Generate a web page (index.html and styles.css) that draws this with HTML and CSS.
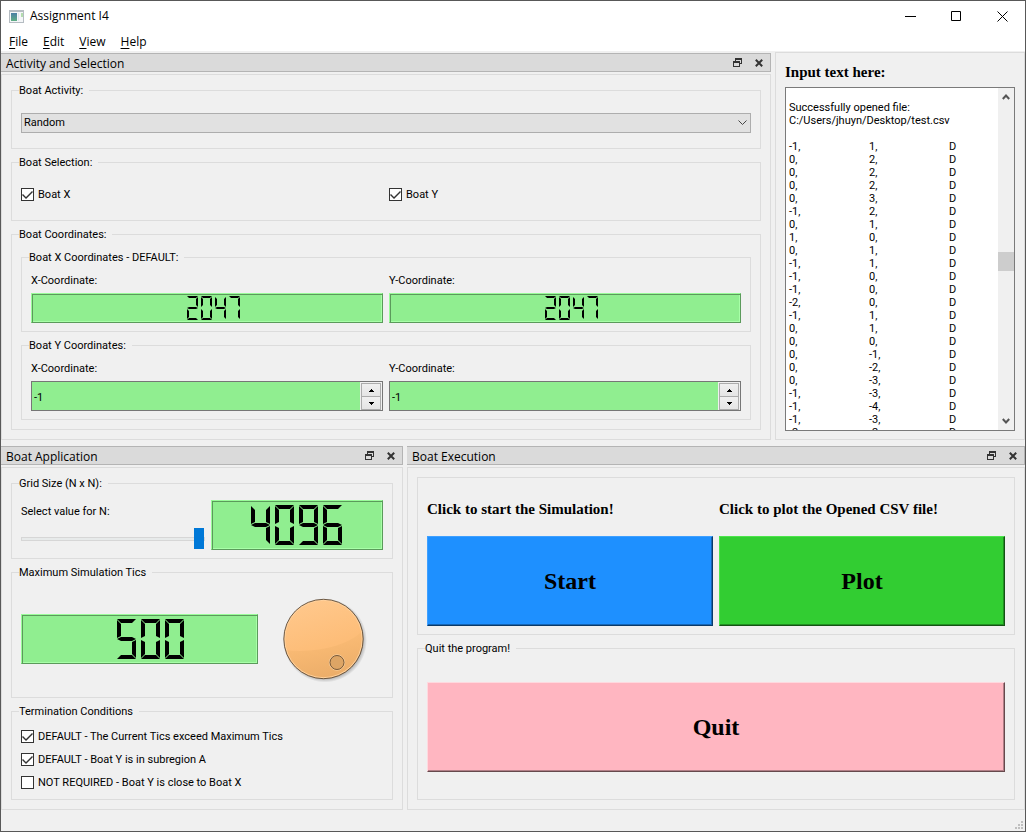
FILE: index.html
```html
<!DOCTYPE html>
<html lang="en">
<head>
<meta charset="utf-8">
<title>Assignment I4</title>
<link rel="stylesheet" href="styles.css">
</head>
<body>
<svg class="defs" aria-hidden="true">
  <symbol id="float" viewBox="0 0 9 9"><path d="M2 0h7v6H7V5h1V2H3v1H2zM0 3h7v6H0zM1 5v3h5V5z" fill="#333" fill-rule="evenodd"/></symbol>
  <symbol id="close" viewBox="0 0 8 8"><path d="M0.8 0.8l6.4 6.4M7.2 0.8L0.8 7.2" stroke="#333" stroke-width="2" fill="none"/></symbol>
</svg>
<div class="window">
  <header class="titlebar">
    <svg class="app-icon" viewBox="0 0 15 13"><defs><linearGradient id="ic" x1="0" y1="0" x2="0" y2="1"><stop offset="0" stop-color="#4a7fa5"/><stop offset="1" stop-color="#5fae84"/></linearGradient></defs><path d="M0 0h15v13H0z" fill="#b5bcc2"/><path d="M1 2h13v10H1z" fill="#f4f6f8"/><path d="M2 3h6v8H2z" fill="url(#ic)"/><path d="M12 3h2v4h-2z" fill="#b3dcae"/><path d="M9 3h1v8H9z" fill="#dfe5ee"/></svg>
    <h1 class="caption">Assignment I4</h1>
    <button class="win-btn" aria-label="Minimize"><svg viewBox="0 0 11 11"><path d="M0 5.5h11" stroke="#000"/></svg></button>
    <button class="win-btn" aria-label="Maximize"><svg viewBox="0 0 11 11"><path d="M.5.5h9v9h-9z" stroke="#000" fill="none"/></svg></button>
    <button class="win-btn" aria-label="Close"><svg viewBox="0 0 11 11"><path d="M.5.5l10 10M10.5.5l-10 10" stroke="#000"/></svg></button>
  </header>
  <nav class="menubar">
    <button class="menu"><u>F</u>ile</button>
    <button class="menu"><u>E</u>dit</button>
    <button class="menu"><u>V</u>iew</button>
    <button class="menu"><u>H</u>elp</button>
  </nav>
  <main class="workspace">
    <div class="row row-top">
      <section class="dock">
        <header class="dock-title"><h2>Activity and Selection</h2>
          <button aria-label="Float"><svg class="ico-float"><use href="#float"/></svg></button>
          <button aria-label="Close panel"><svg class="ico-close"><use href="#close"/></svg></button>
        </header>
        <div class="dock-body">
          <fieldset class="group grow">
            <legend><label for="activity">Boat Activity:</label></legend>
            <div class="combo">
              <select id="activity"><option>Random</option></select>
              <svg class="combo-arrow" viewBox="0 0 9 5"><path d="M.5.5l4 4 4-4" fill="none" stroke="#444"/></svg>
            </div>
          </fieldset>
          <fieldset class="group grow">
            <legend>Boat Selection:</legend>
            <div class="cols">
              <label class="check"><input type="checkbox" checked>Boat X</label>
              <label class="check"><input type="checkbox" checked>Boat Y</label>
            </div>
          </fieldset>
          <fieldset class="group">
            <legend>Boat Coordinates:</legend>
            <div class="stack">
              <fieldset class="group">
                <legend>Boat X Coordinates - DEFAULT:</legend>
                <div class="cols">
                  <div class="field"><span>X-Coordinate:</span>
                    <div class="lcd lcd-small" role="img" aria-label="2047"><i class="digit"></i><i class="digit"><b class="a"></b><b class="b"></b><b class="g"></b><b class="e"></b><b class="d"></b></i><i class="digit"><b class="a"></b><b class="b"></b><b class="c"></b><b class="d"></b><b class="e"></b><b class="f"></b></i><i class="digit"><b class="f"></b><b class="g"></b><b class="b"></b><b class="c"></b></i><i class="digit"><b class="a"></b><b class="b"></b><b class="c"></b></i></div>
                  </div>
                  <div class="field"><span>Y-Coordinate:</span>
                    <div class="lcd lcd-small" role="img" aria-label="2047"><i class="digit"></i><i class="digit"><b class="a"></b><b class="b"></b><b class="g"></b><b class="e"></b><b class="d"></b></i><i class="digit"><b class="a"></b><b class="b"></b><b class="c"></b><b class="d"></b><b class="e"></b><b class="f"></b></i><i class="digit"><b class="f"></b><b class="g"></b><b class="b"></b><b class="c"></b></i><i class="digit"><b class="a"></b><b class="b"></b><b class="c"></b></i></div>
                  </div>
                </div>
              </fieldset>
              <fieldset class="group">
                <legend>Boat Y Coordinates:</legend>
                <div class="cols">
                  <div class="field"><label for="yx">X-Coordinate:</label>
                    <div class="spin"><input id="yx" type="number" value="-1"><div class="steps"><button aria-label="Increase X"><svg viewBox="0 0 5 3"><path d="M2 0h1v1h1v1h1v1H0V2h1V1h1z"/></svg></button><button aria-label="Decrease X"><svg viewBox="0 0 5 3"><path d="M0 0h5v1H4v1H3v1H2V2H1V1H0z"/></svg></button></div></div>
                  </div>
                  <div class="field"><label for="yy">Y-Coordinate:</label>
                    <div class="spin"><input id="yy" type="number" value="-1"><div class="steps"><button aria-label="Increase Y"><svg viewBox="0 0 5 3"><path d="M2 0h1v1h1v1h1v1H0V2h1V1h1z"/></svg></button><button aria-label="Decrease Y"><svg viewBox="0 0 5 3"><path d="M0 0h5v1H4v1H3v1H2V2H1V1H0z"/></svg></button></div></div>
                  </div>
                </div>
              </fieldset>
            </div>
          </fieldset>
        </div>
      </section>
      <section class="side">
        <label class="heading" for="log">Input text here:</label>
        <div class="log">
<textarea id="log" spellcheck="false">

Successfully opened file:
C:/Users/jhuyn/Desktop/test.csv

-1,	1,	D
0,	2,	D
0,	2,	D
0,	2,	D
0,	3,	D
-1,	2,	D
0,	1,	D
1,	0,	D
0,	1,	D
-1,	1,	D
-1,	0,	D
-1,	0,	D
-2,	0,	D
-1,	1,	D
0,	1,	D
0,	0,	D
0,	-1,	D
0,	-2,	D
0,	-3,	D
-1,	-3,	D
-1,	-4,	D
-1,	-3,	D
-2,	-2,	D</textarea>
          <div class="scroll">
            <button aria-label="Scroll up"><svg viewBox="0 0 8 6"><path d="M.8 5L4 1.5 7.200 5" fill="none" stroke="#555" stroke-width="2"/></svg></button>
            <div class="track"><div class="thumb"></div></div>
            <button aria-label="Scroll down"><svg viewBox="0 0 8 6"><path d="M.8 1L4 4.500 7.200 1" fill="none" stroke="#555" stroke-width="2"/></svg></button>
          </div>
        </div>
      </section>
    </div>
    <div class="row row-bottom">
      <section class="dock">
        <header class="dock-title"><h2>Boat Application</h2>
          <button aria-label="Float"><svg class="ico-float"><use href="#float"/></svg></button>
          <button aria-label="Close panel"><svg class="ico-close"><use href="#close"/></svg></button>
        </header>
        <div class="dock-body">
          <fieldset class="group">
            <legend>Grid Size (N x N):</legend>
            <div class="size">
              <div class="slide"><label for="n">Select value for N:</label><input id="n" type="range" min="0" max="4096" value="4096"></div>
              <div class="lcd" role="img" aria-label="4096"><i class="digit"><b class="f"></b><b class="g"></b><b class="b"></b><b class="c"></b></i><i class="digit"><b class="a"></b><b class="b"></b><b class="c"></b><b class="d"></b><b class="e"></b><b class="f"></b></i><i class="digit"><b class="a"></b><b class="b"></b><b class="c"></b><b class="d"></b><b class="f"></b><b class="g"></b></i><i class="digit"><b class="a"></b><b class="c"></b><b class="d"></b><b class="e"></b><b class="f"></b><b class="g"></b></i></div>
            </div>
          </fieldset>
          <fieldset class="group grow">
            <legend>Maximum Simulation Tics</legend>
            <div class="tics">
              <div class="lcd" role="img" aria-label="500"><i class="digit"></i><i class="digit"><b class="a"></b><b class="f"></b><b class="g"></b><b class="c"></b><b class="d"></b></i><i class="digit"><b class="a"></b><b class="b"></b><b class="c"></b><b class="d"></b><b class="e"></b><b class="f"></b></i><i class="digit"><b class="a"></b><b class="b"></b><b class="c"></b><b class="d"></b><b class="e"></b><b class="f"></b></i></div>
              <svg class="dial" viewBox="0 0 88 88" role="img" aria-label="Maximum tics dial">
                <defs>
                  <linearGradient id="face" x1=".3" y1="0" x2=".6" y2="1"><stop offset="0" stop-color="#ffc88c"/><stop offset=".6" stop-color="#fdbd78"/><stop offset="1" stop-color="#fbbb75"/></linearGradient>
                  <linearGradient id="shade" x1=".3" y1=".1" x2=".6" y2="1"><stop offset="0" stop-color="#fcbd78"/><stop offset=".4" stop-color="#f6b771"/><stop offset="1" stop-color="#ebad69"/></linearGradient>
                  <radialGradient id="drop"><stop offset=".88" stop-color="#000" stop-opacity=".3"/><stop offset="1" stop-color="#000" stop-opacity="0"/></radialGradient>
                </defs>
                <circle cx="45" cy="45.500" r="42" fill="url(#drop)"/>
                <circle cx="43.500" cy="44" r="39.500" fill="url(#face)"/>
                <path d="M5.500 55C34 59 70 50 82 36A39.500 39.500 0 0 1 5.500 55z" fill="url(#shade)"/>
                <circle cx="43.500" cy="44" r="38.700" fill="none" stroke="#ffd29e"/>
                <circle cx="43.500" cy="44" r="39.700" fill="none" stroke="#5d4a34" stroke-width=".9"/>
                <circle cx="57" cy="67.500" r="7.700" fill="none" stroke="#f8cf9d"/>
                <circle cx="57" cy="67.500" r="7" fill="#dda565" stroke="#77593a"/>
              </svg>
            </div>
          </fieldset>
          <fieldset class="group">
            <legend>Termination Conditions</legend>
            <div class="checks">
              <label class="check"><input type="checkbox" checked>DEFAULT - The Current Tics exceed Maximum Tics</label>
              <label class="check"><input type="checkbox" checked>DEFAULT - Boat Y is in subregion A</label>
              <label class="check"><input type="checkbox">NOT REQUIRED - Boat Y is close to Boat X</label>
            </div>
          </fieldset>
        </div>
      </section>
      <section class="dock">
        <header class="dock-title"><h2>Boat Execution</h2>
          <button aria-label="Float"><svg class="ico-float"><use href="#float"/></svg></button>
          <button aria-label="Close panel"><svg class="ico-close"><use href="#close"/></svg></button>
        </header>
        <div class="dock-body halves">
          <div class="group actions">
            <div class="action"><p class="heading">Click to start the Simulation!</p><button class="big start">Start</button></div>
            <div class="action"><p class="heading">Click to plot the Opened CSV file!</p><button class="big plot">Plot</button></div>
          </div>
          <fieldset class="group grow">
            <legend>Quit the program!</legend>
            <div class="quit-wrap"><button class="big quit">Quit</button></div>
          </fieldset>
        </div>
      </section>
    </div>
  </main>
  <footer class="statusbar"><svg class="grip" viewBox="0 0 8 8"><path d="M6 0h2v2H6zM3 3h2v2H3zM6 3h2v2H6zM0 6h2v2H0zM3 6h2v2H3zM6 6h2v2H6z" fill="#bfbfbf"/></svg></footer>
</div>
</body>
</html>
```
FILE: styles.css
```css
* { box-sizing: border-box; }

body {
  margin: 0;
  font: 11px/13px Roboto, sans-serif;
  color: #000;
  background: #f0f0f0;
}

button, input, select, textarea { font: inherit; color: inherit; margin: 0; }
button { padding: 0; border: 0; background: none; }
h1, h2, p { margin: 0; font-weight: normal; }
svg { display: block; }
.defs { position: absolute; width: 0; height: 0; }

.window {
  display: flex;
  flex-direction: column;
  min-height: 100vh;
  border: 1px solid #585858;
  background: #f0f0f0;
}

/* title bar and menu */
.titlebar { display: flex; align-items: center; height: 30px; padding-left: 8px; background: #fff; }
.app-icon { width: 15px; height: 13px; }
.caption, .menubar, .dock-title h2 { font-family: "Open Sans", sans-serif; }
.caption { flex: 1; padding-left: 6px; font-size: 12px; line-height: 16px; }
.win-btn { display: grid; place-items: center; width: 46px; height: 28px; }
.win-btn svg { width: 11px; height: 11px; }
.menubar { display: flex; gap: 15px; padding: 1px 8px 0; background: #fff; font-size: 12px; line-height: 19px; }
.menu u { text-underline-offset: 2px; }

/* docks */
.workspace { flex: 1; display: grid; grid-template-rows: 388fr 364fr; gap: 6px; padding-top: 1px; }
.row { display: grid; min-height: 0; }
.row-top { grid-template-columns: minmax(0, 1fr) 250px; gap: 4px; }
.row-bottom { grid-template-columns: minmax(0, 402fr) minmax(0, 618fr); gap: 4px; }
.dock { display: flex; flex-direction: column; gap: 2px; min-width: 0; }
.row-top .dock { padding-top: 1px; }
.dock-title {
  display: flex;
  align-items: center;
  height: 19px;
  padding: 0 5px;
  border: 1px solid #b4b4b4;
  border-left: 0;
  background: #dadada;
  gap: 8px;
}
.dock-title h2 { flex: 1; padding-top: 2px; font-size: 12px; line-height: 15px; }
.dock-title button { display: grid; place-items: center; width: 13px; height: 14px; }
.ico-float { width: 9px; height: 9px; }
.ico-close { width: 8px; height: 8px; }
.dock-body {
  flex: 1;
  display: flex;
  flex-direction: column;
  gap: 7px;
  padding: 9px;
  border: 1px solid #dcdcdc;
}

/* group boxes */
.group { min-width: 0; margin: 0; padding: 10px 9px 8px; border: 1px solid #dcdcdc; }
.group legend { margin-left: -2px; padding: 0 6px 0 0; }
.grow { flex: 1; padding-top: 0; padding-bottom: 0; display: grid; align-items: center; }
.cols { display: grid; grid-template-columns: 1fr 1fr; gap: 6px; }
.stack { display: flex; flex-direction: column; gap: 7px; margin-bottom: 1px; }
.field { display: flex; flex-direction: column; gap: 6px; min-width: 0; }

.combo { display: grid; align-items: center; }
.combo > * { grid-area: 1 / 1; }
.combo select {
  appearance: none;
  width: 100%;
  height: 20px;
  padding: 0 2px;
  border: 1px solid #adadad;
  border-radius: 0;
  background: #e1e1e1;
}
.combo-arrow { justify-self: end; width: 9px; height: 5px; margin-right: 4px; pointer-events: none; }

.check { display: flex; align-items: center; gap: 4px; min-height: 17px; }
.check input {
  appearance: none;
  flex: none;
  width: 13px;
  height: 13px;
  border: 1px solid #333;
  background: #fff;
}
.check input:checked::before {
  content: "";
  display: block;
  width: 11px;
  height: 11px;
  background: #333;
  clip-path: polygon(0 6px, 1px 5px, 4px 8px, 10px 2px, 11px 3px, 4px 10px);
}

/* seven-segment displays */
.lcd {
  --w: 19px; --h: 40px; --t: 4px; --gap: 5px;
  display: flex;
  align-items: center;
  justify-content: center;
  gap: var(--gap);
  height: 50px;
  padding-right: 1px;
  border: 1px solid;
  border-color: #98fb98 #5b9a5b #5b9a5b #98fb98;
  background: #90ee90;
  box-shadow: inset 1px 1px #5b9a5b, inset -1px -1px #a8ffa8;
}
.lcd-small { --w: 11px; --h: 24px; --t: 2px; --gap: 3px; height: 30px; }
.tics .lcd { padding-right: 2px; }
.digit { display: grid; width: var(--w); height: var(--h); }
.digit b { grid-area: 1 / 1; background: #000; }
.digit .a, .digit .d { height: var(--t); clip-path: polygon(0 0, 100% 0, calc(100% - var(--t)) 100%, var(--t) 100%); }
.digit .d { align-self: end; clip-path: polygon(var(--t) 0, calc(100% - var(--t)) 0, 100% 100%, 0 100%); }
.digit .g { align-self: center; height: var(--t); clip-path: polygon(0 50%, var(--t) 0, calc(100% - var(--t)) 0, 100% 50%, calc(100% - var(--t)) 100%, var(--t) 100%); }
.digit .b, .digit .c, .digit .e, .digit .f { width: var(--t); height: calc(50% - 1px); }
.digit .b, .digit .c { justify-self: end; }
.digit .c, .digit .e { align-self: end; }
.digit .f { clip-path: polygon(0 1px, 100% calc(var(--t) + 1px), 100% calc(100% - 2px), 0 100%); }
.digit .e { clip-path: polygon(0 0, 100% 2px, 100% calc(100% - var(--t) - 1px), 0 calc(100% - 1px)); }
.digit .b { clip-path: polygon(100% 1px, 0 calc(var(--t) + 1px), 0 calc(100% - 2px), 100% 100%); }
.digit .c { clip-path: polygon(100% 0, 0 2px, 0 calc(100% - var(--t) - 1px), 100% calc(100% - 1px)); }

/* spin boxes */
.spin { display: flex; height: 30px; border: 1px solid #767676; background: #f0f0f0; }
.spin input {
  appearance: textfield;
  flex: 1;
  min-width: 0;
  padding: 2px 2px 0;
  border: 0;
  background: #90ee90;
}
.spin input::-webkit-inner-spin-button { display: none; }
.steps { display: grid; grid-template-rows: 14px 13px; width: 22px; padding: 1px; }
.steps button { display: grid; place-items: center; border: 1px solid #acacac; background: linear-gradient(#f0f0f0, #e5e5e5); }
.steps button + button { border-top: 0; }
.steps svg { width: 5px; height: 3px; }

/* text panel */
.side {
  display: flex;
  flex-direction: column;
  gap: 5px;
  min-height: 0;
  padding: 10px 9px 8px;
  border: 1px solid #dcdcdc;
}
.heading { font: bold 15px/19px "Liberation Serif", serif; }
.log { flex: 1; display: flex; min-height: 0; border: 1px solid #7a7a7a; background: #fff; }
.log textarea {
  flex: 1;
  min-width: 0;
  padding: 0 0 0 3px;
  border: 0;
  background: none;
  resize: none;
  overflow: hidden;
  tab-size: 80px;
  line-height: 13px;
  white-space: pre;
}
.scroll { display: flex; flex-direction: column; width: 16px; background: #f0f0f0; }
.scroll button { display: grid; place-items: center; height: 18px; }
.scroll svg { width: 8px; height: 6px; }
.track { flex: 1; display: grid; grid-template-rows: 147fr 19px 141fr; }
.thumb { grid-row: 2; background: #cdcdcd; }

/* application dock */
.size { display: grid; grid-template-columns: 184fr 172fr; gap: 6px; }
.slide { display: flex; flex-direction: column; justify-content: space-between; padding: 5px 0 1px; }
.slide input { appearance: none; width: 100%; height: 21px; background: none; }
.slide input::-webkit-slider-runnable-track { height: 4px; border: 1px solid #d6d6d6; background: #e7eaea; }
.slide input::-webkit-slider-thumb { appearance: none; width: 10px; height: 21px; margin-top: -10px; background: #0078d7; }
.tics { display: grid; grid-template-columns: 237fr 119fr; align-items: center; gap: 6px; padding-top: 2px; }
.dial { width: 88px; height: 88px; justify-self: center; }
.checks { display: grid; gap: 6px; }

/* execution dock */
.halves { display: grid; grid-template-rows: 1fr 1fr; }
.actions { display: grid; grid-template-columns: 1fr 1fr; gap: 6px; }
.action { display: flex; flex-direction: column; gap: 6px; }
.action .heading { flex: 1; display: flex; align-items: center; }
.big { display: block; height: 90px; width: 100%; border: 1px solid; font: bold 24px/28px "Liberation Serif", serif; }
.start { background: #1e90ff; border-color: #3fa0ff #0b3a68 #0b3a68 #3fa0ff; box-shadow: inset -1px -1px #1565b4; }
.plot { background: #32cd32; border-color: #4be64b #145214 #145214 #4be64b; box-shadow: inset -1px -1px #238f23; }
.quit { background: #ffb6c1; border-color: #ffd9df #66494d #66494d #ffd9df; box-shadow: inset -1px -1px #b27f87; }

.statusbar { display: flex; align-items: flex-end; justify-content: flex-end; height: 21px; padding: 2px; }
.grip { width: 8px; height: 8px; }
```
